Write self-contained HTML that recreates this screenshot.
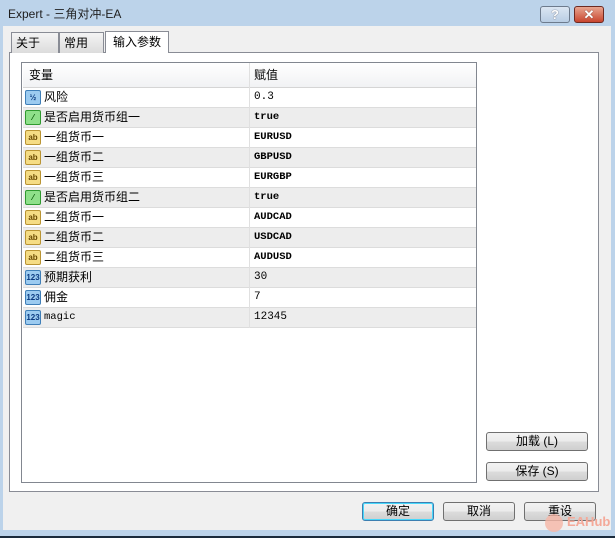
<!DOCTYPE html>
<html><head><meta charset="utf-8"><style>
*{margin:0;padding:0;box-sizing:border-box}
body{width:615px;height:538px;background:#bcd3ea;position:relative;overflow:hidden;font-family:"Liberation Sans","Noto Sans CJK SC",sans-serif;font-size:12px;color:#000;line-height:14px}
.abs{position:absolute}
.title{left:8px;top:7px;font-size:12px;color:#1e1e1e}
.tb{top:6px;height:17px;border:1px solid #6d7b8d;border-radius:3px}
.client{left:3px;top:26px;width:608px;height:504px;background:#f0f0f0}
.tab{top:32px;height:21px;border:1px solid #898c95;border-bottom:none;background:linear-gradient(#f4f4f4,#dcdcdc);font-size:12px;padding:0 0 0 4px;line-height:20px}
.panel{left:9px;top:52px;width:590px;height:440px;background:#fff;border:1px solid #898c95}
.list{left:21px;top:62px;width:456px;height:421px;border:1px solid #828790;background:#fff}
.row{position:absolute;left:1px;width:453px;height:20px;border-bottom:1px solid #dcdcdc;font-size:12px}
.row .n{position:absolute;left:21px;top:0;line-height:19px}
.row .v{position:absolute;left:231px;top:0;line-height:19px;font-family:"Liberation Mono",monospace;font-size:10.5px;font-weight:bold}
.row .d{position:absolute;left:226px;top:0;height:20px;border-left:1px solid #e0e0e0}
.ic{position:absolute;left:2px;top:2px;width:16px;height:15px;border-radius:2px;font-size:8px;font-weight:bold;text-align:center;line-height:13px}
.ab{background:#f5dc84;border:1px solid #b99433;color:#6a4a00}
.n1{background:#9ccbf0;border:1px solid #3f7fb8;color:#0a3a80}
.bo{background:#8ee08a;border:1px solid #2f9a2f;color:#0a5a0a}
.g{background:#ededed}
.btn{height:19px;border:1px solid #707070;border-radius:3px;background:linear-gradient(#f2f2f2 0%,#ebebeb 50%,#dcdcdc 51%,#cfcfcf 100%);text-align:center;font-size:12px;line-height:16px}
</style></head><body>
<div class="abs title">Expert - 三角对冲-EA</div>
<div class="abs tb" style="left:540px;width:30px;background:linear-gradient(#dbe6f3,#b9cde4);text-align:center;font-weight:bold;color:#fff;font-size:13px;line-height:15px;text-shadow:0 0 1px #334">?</div>
<div class="abs tb" style="left:574px;width:30px;background:linear-gradient(#e8a590,#c8452e);border-color:#6d2a22;text-align:center;font-weight:bold;color:#fff;font-size:13px;line-height:15px;text-shadow:0 0 1px #422">✕</div>
<div class="abs client"></div>
<div class="abs panel"></div>
<div class="abs tab" style="left:11px;width:48px">关于</div>
<div class="abs tab" style="left:59px;width:45px">常用</div>
<div class="abs tab" style="left:105px;top:31px;width:64px;height:22px;background:#fff;padding-left:7px">输入参数</div>
<div class="abs list">
<div class="row" style="top:0;height:25px;background:linear-gradient(#fff,#f1f2f4);border-bottom:1px solid #d5d5d5"><span class="n" style="left:6px;top:3px">变量</span><span class="d" style="height:25px"></span><span class="n" style="left:231px;top:3px">赋值</span></div>
<div class="row" style="top:25px"><span class="ic n1">½</span><span class="n">风险</span><span class="d"></span><span class="v" style="font-weight:normal;font-size:11px">0.3</span></div>
<div class="row g" style="top:45px"><span class="ic bo">⁄</span><span class="n">是否启用货币组一</span><span class="d"></span><span class="v">true</span></div>
<div class="row" style="top:65px"><span class="ic ab">ab</span><span class="n">一组货币一</span><span class="d"></span><span class="v">EURUSD</span></div>
<div class="row g" style="top:85px"><span class="ic ab">ab</span><span class="n">一组货币二</span><span class="d"></span><span class="v">GBPUSD</span></div>
<div class="row" style="top:105px"><span class="ic ab">ab</span><span class="n">一组货币三</span><span class="d"></span><span class="v">EURGBP</span></div>
<div class="row g" style="top:125px"><span class="ic bo">⁄</span><span class="n">是否启用货币组二</span><span class="d"></span><span class="v">true</span></div>
<div class="row" style="top:145px"><span class="ic ab">ab</span><span class="n">二组货币一</span><span class="d"></span><span class="v">AUDCAD</span></div>
<div class="row g" style="top:165px"><span class="ic ab">ab</span><span class="n">二组货币二</span><span class="d"></span><span class="v">USDCAD</span></div>
<div class="row" style="top:185px"><span class="ic ab">ab</span><span class="n">二组货币三</span><span class="d"></span><span class="v">AUDUSD</span></div>
<div class="row g" style="top:205px"><span class="ic n1">123</span><span class="n">预期获利</span><span class="d"></span><span class="v" style="font-weight:normal;font-size:11px">30</span></div>
<div class="row" style="top:225px"><span class="ic n1">123</span><span class="n">佣金</span><span class="d"></span><span class="v" style="font-weight:normal;font-size:11px">7</span></div>
<div class="row g" style="top:245px"><span class="ic n1">123</span><span class="n" style="font-family:'Liberation Mono',monospace;font-size:10.5px">magic</span><span class="d"></span><span class="v" style="font-weight:normal;font-size:11px">12345</span></div>
</div>
<div class="abs btn" style="left:486px;top:432px;width:102px">加载 (L)</div>
<div class="abs btn" style="left:486px;top:462px;width:102px">保存 (S)</div>
<div class="abs btn" style="left:362px;top:502px;width:72px;border-color:#3c7fb1;box-shadow:inset 0 0 0 1px #48d8fb">确定</div>
<div class="abs btn" style="left:443px;top:502px;width:72px">取消</div>
<div class="abs btn" style="left:524px;top:502px;width:72px">重设</div>
<div class="abs" style="left:545px;top:514px;width:18px;height:18px;border-radius:50%;background:#f6b7a6;opacity:.8"></div>
<div class="abs" style="left:567px;top:515px;color:#f4a999;font-weight:bold;font-size:13px">EAHub</div>
<div class="abs" style="left:0;top:536px;width:615px;height:2px;background:#1b2b3b"></div>
</body></html>
